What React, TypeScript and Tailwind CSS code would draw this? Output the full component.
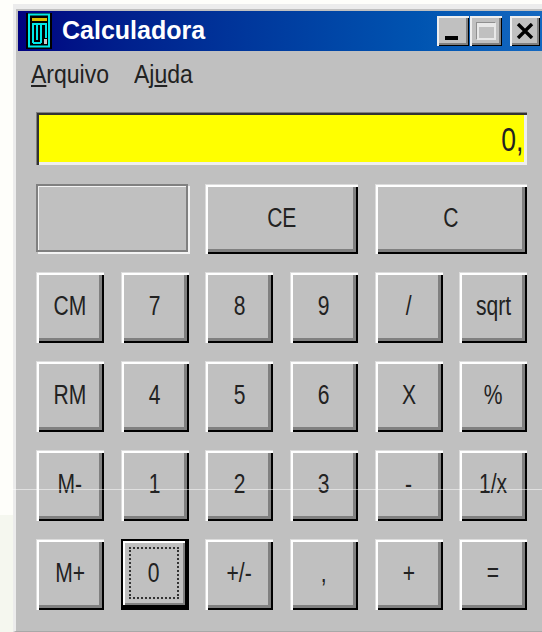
const raised =
  "shadow-[inset_1px_1px_0_#dcdcdc,inset_3px_3px_0_#fff,inset_-2px_-2px_0_#000,inset_-5px_-5px_0_#808080]";

const rows = [
  ["CM", "7", "8", "9", "/", "sqrt"],
  ["RM", "4", "5", "6", "X", "%"],
  ["M-", "1", "2", "3", "-", "1/x"],
  ["M+", "0", "+/-", ",", "+", "="],
];

// the system font is tall and narrow, so squeeze the glyphs sideways
function Label({ text }: { text: string }) {
  return <span className="inline-block scale-x-[0.78] text-[27px] leading-none">{text}</span>;
}

function Key({ label }: { label: string }) {
  if (label === "0") {
    return (
      <button className="h-[71px] w-[68px] bg-black pb-[5px] pl-[2px] pr-[4px] pt-[2px]">
        <span className="flex h-full items-center justify-center bg-[#c0c0c0] p-[6px] shadow-[inset_2px_2px_0_#fff,inset_-2px_-2px_0_#808080]">
          <span className="flex h-full w-full items-center justify-center border-2 border-dotted border-[#333]">
            <Label text={label} />
          </span>
        </span>
      </button>
    );
  }
  return (
    <button className={`flex h-[71px] w-[68px] items-center justify-center bg-[#c0c0c0] pb-[2px] ${raised}`}>
      <Label text={label} />
    </button>
  );
}

function CalcIcon() {
  return (
    <svg width="26" height="36" viewBox="0 0 26 36" className="shrink-0">
      <rect width="26" height="36" fill="#000" />
      <rect x="3" y="1.5" width="20" height="32" fill="#000" stroke="#00e8e8" strokeWidth="2" />
      <rect x="6" y="5" width="15" height="3" fill="#d8c000" />
      <path d="M7 30V11H20V25M11 27V11M15 30V11M7 30h8" fill="none" stroke="#00e8e8" strokeWidth="2" />
      <rect x="18" y="26" width="3" height="5" fill="#c8c8c8" />
    </svg>
  );
}

function TitleButton({ children, className = "" }: { children: React.ReactNode; className?: string }) {
  return (
    <div
      className={`flex h-[30px] items-center justify-center bg-[#c0c0c0] shadow-[inset_2px_2px_0_#eee,inset_-1px_-1px_0_#000,inset_-3px_-3px_0_#808080] ${className}`}
    >
      {children}
    </div>
  );
}

export default function App() {
  return (
    <div className="relative h-[632px] w-[542px] overflow-hidden bg-[#fefefa] pl-[13px] pt-[4px] font-['Liberation_Sans',sans-serif]">
      <div className="absolute bottom-0 left-0 h-[117px] w-[13px] bg-[#f5f7ef]" />
      <div className="relative flex h-[628px] flex-col border-b border-l-[3px] border-t-[5px] border-b-[#a8a8a8] border-l-[#ececec] border-t-[#ececec] bg-[#c0c0c0] pl-[2px] pt-[2px] text-[#222]">
        {/* title bar */}
        <div className="flex h-[40px] items-center bg-gradient-to-r from-[#000080] to-[#1468c0] pl-[8px] pr-[2px]">
          <CalcIcon />
          <span className="ml-[10px] flex-1 text-[25px] font-bold text-white">Calculadora</span>
          <TitleButton className="w-[32px]">
            <span className="mr-[4px] mt-[14px] h-[4px] w-[13px] bg-black" />
          </TitleButton>
          <TitleButton className="ml-[1px] w-[32px]">
            <span className="h-[17px] w-[19px] border-2 border-t-4 border-[#e8e8e8] shadow-[-1px_-1px_0_#909090]" />
          </TitleButton>
          <TitleButton className="ml-[8px] w-[30px]">
            <svg width="18" height="16" viewBox="0 0 18 16">
              <path d="M2 1l14 14M16 1L2 15" stroke="#000" strokeWidth="3.4" />
            </svg>
          </TitleButton>
        </div>

        {/* menu */}
        <div className="flex h-[48px] items-center gap-[18px] pl-[13px] text-[25px] text-[#222]">
          <span className="inline-block origin-left scale-x-[0.92]">
            <u className="underline-offset-2">A</u>rquivo
          </span>
          <span className="inline-block origin-left scale-x-[0.92]">
            Aj<u className="underline-offset-2">u</u>da
          </span>
        </div>

        <div className="flex flex-col pl-[18px] pr-[15px] pt-[13px]">
          {/* display */}
          <div className="flex h-[53px] items-center justify-end bg-[#ffff00] pr-[4px] text-[34px] text-[#222] shadow-[inset_1px_1px_0_#808080,inset_3px_3px_0_#333,inset_-3px_-3px_0_#eee]">
            <span className="inline-block origin-right scale-x-[0.78] leading-none">0,</span>
          </div>

          <div className="mt-[19px] grid grid-cols-3 gap-x-[17px]">
            <div className="h-[68px] border-2 border-[#808080] shadow-[inset_1px_1px_0_#f4f4f4,2px_2px_0_#f4f4f4]" />
            <button className={`flex h-[70px] items-center justify-center bg-[#c0c0c0] pb-[2px] ${raised}`}>
              <Label text="CE" />
            </button>
            <button className={`flex h-[70px] items-center justify-center bg-[#c0c0c0] pb-[2px] ${raised}`}>
              <Label text="C" />
            </button>
          </div>

          <div className="mt-[18px] grid grid-cols-6 gap-x-[17px] gap-y-[18px]">
            {rows.flat().map((label) => (
              <Key key={label} label={label} />
            ))}
          </div>
        </div>
      </div>
      {/* faint scan line across the lower rows */}
      <div className="absolute left-[12px] right-0 top-[489px] h-px bg-white/50" />
    </div>
  );
}
